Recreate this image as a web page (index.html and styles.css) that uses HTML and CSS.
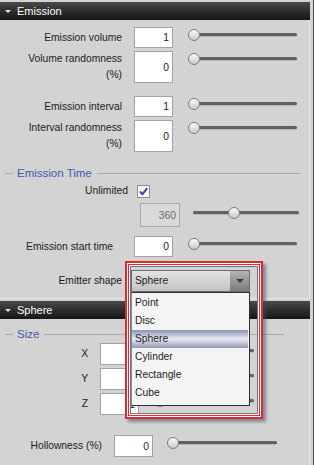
FILE: index.html
```html
<!DOCTYPE html>
<html lang="en">
<head>
  <meta charset="UTF-8" />
  <title>Emission</title>
  <link rel="stylesheet" href="styles.css">
</head>
<body>
  <div class="window">
    <section class="section">
      <div class="section-head"><span class="caret"></span>Emission</div>
      <div class="section-body">
        <div class="row">
          <label class="lbl">Emission volume</label>
          <input class="num" type="text" value="1" />
          <div class="slider"><span class="knob"></span></div>
        </div>
        <div class="row">
          <label class="lbl two">Volume randomness (%)</label>
          <input class="num tall" type="text" value="0" />
          <div class="slider"><span class="knob"></span></div>
        </div>
        <div class="row spaced">
          <label class="lbl">Emission interval</label>
          <input class="num" type="text" value="1" />
          <div class="slider"><span class="knob"></span></div>
        </div>
        <div class="row">
          <label class="lbl two">Interval randomness (%)</label>
          <input class="num tall" type="text" value="0" />
          <div class="slider"><span class="knob"></span></div>
        </div>

        <div class="group">Emission Time</div>

        <div class="row check-row">
          <label class="lbl check-lbl">Unlimited</label>
          <span class="checkbox">
            <svg width="11" height="11" viewBox="0 0 11 11"><path d="M2 5.5 L4.5 8.2 L9.2 2.2" fill="none" stroke="#2d45aa" stroke-width="1.9"/></svg>
          </span>
        </div>
        <div class="row limit-row">
          <input class="num wide" type="text" value="360" disabled />
          <div class="slider long"><span class="knob" style="left: 35px"></span></div>
        </div>
        <div class="row start-row">
          <label class="lbl narrow">Emission start time</label>
          <input class="num" type="text" value="0" />
          <div class="slider"><span class="knob"></span></div>
        </div>
        <div class="row spaced">
          <label class="lbl combo-lbl">Emitter shape</label>
          <div class="combo">
            <span class="combo-text">Sphere</span>
            <span class="combo-btn"><span class="arrow"></span></span>
            <ul class="list">
              <li>Point</li>
              <li>Disc</li>
              <li class="active">Sphere</li>
              <li>Cylinder</li>
              <li>Rectangle</li>
              <li>Cube</li>
            </ul>
          </div>
        </div>
      </div>
    </section>

    <section class="section">
      <div class="section-head"><span class="caret"></span>Sphere</div>
      <div class="section-body sphere">
        <div class="group short">Size</div>
        <div class="row xyz">
          <label class="lbl axis">X</label>
          <input class="num" type="text" value="1" />
          <div class="slider axis-slider"><span class="knob"></span></div>
        </div>
        <div class="row xyz">
          <label class="lbl axis">Y</label>
          <input class="num" type="text" value="1" />
          <div class="slider axis-slider"><span class="knob"></span></div>
        </div>
        <div class="row xyz">
          <label class="lbl axis">Z</label>
          <input class="num" type="text" value="1" />
          <div class="slider axis-slider"><span class="knob"></span></div>
        </div>
        <div class="row hollow">
          <label class="lbl hollow-lbl">Hollowness (%)</label>
          <input class="num" type="text" value="0" />
          <div class="slider hollow-slider"><span class="knob"></span></div>
        </div>
      </div>
    </section>

    <div class="callout"></div>
  </div>
</body>
</html>
```

FILE: styles.css
```css
* {
  box-sizing: border-box;
}
body {
  margin: 0;
  background: #d3d3d3;
  font-family: "Liberation Sans", Arial, sans-serif;
  font-size: 10.3px;
  color: #1c1c1c;
}
.window {
  position: relative;
  width: 314px;
  height: 465px;
  border-right: 1px solid #4d4d4d;
  overflow: hidden;
}
.section {
  width: 310px;
  margin-top: 2px;
}
.section-head {
  display: flex;
  align-items: center;
  gap: 6px;
  height: 18px;
  padding-left: 5px;
  background: linear-gradient(#4a4a4a, #2b2b2b 55%, #171717);
  color: #fff;
  font-size: 11px;
}
.caret {
  width: 0;
  height: 0;
  border-left: 3px solid transparent;
  border-right: 3px solid transparent;
  border-top: 3px solid #e4e4e4;
}
.section-body {
  padding: 7px 0 6px;
  border-right: 1px solid #e6e6e6;
  border-bottom: 1px solid #e6e6e6;
}
.section-body.sphere {
  padding-top: 8px;
  height: 150px;
}

/* rows */
.row {
  display: flex;
  align-items: flex-start;
  margin-top: 3px;
}
.row:first-child {
  margin-top: 0;
}
.row.spaced {
  margin-top: 13px;
}
.lbl {
  flex: none;
  width: 122px;
  padding-left: 18px;
  text-align: right;
  line-height: 21px;
}
.lbl.two {
  line-height: 16px;
}
.num {
  flex: none;
  width: 39px;
  height: 21px;
  margin: 0 0 0 12px;
  padding: 0 3px;
  border: 1px solid #a3a3a3;
  background: #fff;
  font: inherit;
  color: #1c1c1c;
  text-align: right;
  outline: none;
}
.num.tall {
  height: 32px;
}
.num.wide {
  width: 40px;
  height: 24px;
  margin-left: 140px;
  background: #d9d9d9;
  border-color: #a8a8a8;
  color: #6e6e6e;
}

/* sliders */
.slider {
  position: relative;
  flex: none;
  width: 109px;
  height: 18px;
  margin-left: 15px;
}
.slider::before {
  content: "";
  position: absolute;
  left: 5px;
  right: 0;
  top: 6px;
  height: 3px;
  border-radius: 2px;
  background: #626262;
  box-shadow: 0 1px 0 #b8b8b8;
}
.knob {
  position: absolute;
  top: 2px;
  left: 0;
  width: 12px;
  height: 12px;
  border-radius: 50%;
  border: 1px solid #7c7c7c;
  background: linear-gradient(#fbfbfb, #c9c9c9);
}
.slider.long {
  width: 106px;
  margin-left: 13px;
  margin-top: 2px;
}
.slider.long::before {
  left: 0;
}

/* group titles */
.group {
  display: flex;
  align-items: center;
  height: 14px;
  margin-top: 14px;
  color: #4757b2;
  font-size: 11.5px;
}
.group::before {
  content: "";
  width: 8px;
  margin: 0 4px 0 5px;
  border-top: 1px solid #a9a9a9;
}
.group::after {
  content: "";
  flex: 1;
  margin: 0 9px 0 5px;
  border-top: 1px solid #a9a9a9;
}
.group.short {
  margin-top: 0;
}
.group.short::after {
  margin-right: 25px;
}

/* checkbox */
.row.check-row {
  margin-top: 4px;
}
.check-lbl {
  width: 128px;
  line-height: 14px;
}
.checkbox {
  display: flex;
  align-items: center;
  justify-content: center;
  width: 13px;
  height: 13px;
  margin: 1px 0 0 9px;
  border: 1px solid #8c8c8c;
  background: #fbfbfb;
}
.row.limit-row {
  margin-top: 5px;
}
.row.start-row {
  margin-top: 9px;
}
.lbl.narrow {
  padding-right: 9px;
}

/* combo box */
.combo-lbl {
  line-height: 22px;
}
.combo {
  position: relative;
  display: flex;
  width: 119px;
  height: 22px;
  margin-left: 9px;
  border: 1px solid #6c6c6c;
  background: linear-gradient(#e3e3e3, #c3c3c3);
}
.combo-text {
  flex: 1;
  padding-left: 3px;
  line-height: 20px;
}
.combo-btn {
  display: flex;
  align-items: center;
  justify-content: center;
  width: 19px;
  background: linear-gradient(#b4b4b4, #7b7b7b);
}
.arrow {
  width: 0;
  height: 0;
  border-left: 4px solid transparent;
  border-right: 4px solid transparent;
  border-top: 4px solid #3c3c3c;
}
.list {
  position: absolute;
  z-index: 2;
  left: -1px;
  top: 21px;
  width: 119px;
  margin: 0;
  padding: 1px 0 3px;
  list-style: none;
  background: #f4f4f4;
  border: 1px solid #2e2e2e;
  border-left-color: #8a8a8a;
}
.list li {
  height: 18px;
  padding-left: 3px;
  line-height: 18px;
}
.list li.active {
  margin-right: 1px;
  background: linear-gradient(#8d92b2, #e9ebf3 50%, #9297b6);
}

/* sphere rows */
.row.xyz {
  margin-top: 3px;
}
.group + .row.xyz {
  margin-top: 2px;
}
.sphere .lbl {
  line-height: 22px;
}
.sphere .num {
  height: 22px;
}
.lbl.axis {
  width: 88px;
}
.slider.axis-slider {
  width: 100px;
}
.row.hollow {
  margin-top: 20px;
}
.lbl.hollow-lbl {
  width: 102px;
  padding-left: 0;
}
.slider.hollow-slider {
  width: 110px;
  margin-left: 14px;
}

/* highlight frame drawn over the open list */
.callout {
  position: absolute;
  z-index: 3;
  left: 125px;
  top: 261px;
  width: 138px;
  height: 158px;
  border: 2px solid #e5262b;
  box-shadow: inset 0 0 0 1px #fff, inset 0 0 0 2px #e5262b, inset 0 0 0 3px #fff,
    3px 3px 3px rgba(60, 80, 100, 0.55);
  pointer-events: none;
}
.callout::after {
  content: "";
  position: absolute;
  inset: 3px;
  border: 1px solid #64798b;
}
```
